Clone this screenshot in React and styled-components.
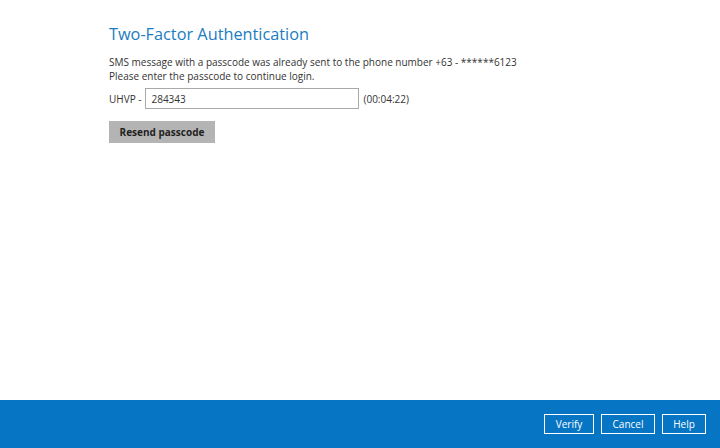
import styled, { createGlobalStyle } from 'styled-components';

const GlobalStyle = createGlobalStyle`
    html, body {
        margin: 0;
        padding: 0;
        background: #ffffff;
    }
    body {
        font-family: "Open Sans", "Noto Sans", sans-serif;
        color: #333333;
    }
`;

const Page = styled.div`
    display: flex;
    flex-direction: column;
    width: 720px;
    height: 448px;
    overflow: hidden;
`;

const Content = styled.main`
    flex: 1;
    padding: 22px 0 0 109px;
`;

const Title = styled.h1`
    margin: 0 0 9px 0;
    font-size: 16.3px;
    font-weight: 400;
    color: #1b7cc0;
    line-height: 24px;
`;

const Message = styled.p`
    margin: 0;
    font-size: 10px;
    line-height: 14px;
    color: #333333;
`;

const CodeRow = styled.div`
    display: flex;
    align-items: center;
    gap: 4px;
    margin-top: 5px;
    font-size: 10px;
    color: #333333;
`;

const CodeInput = styled.input`
    box-sizing: border-box;
    width: 214px;
    height: 21px;
    margin: 0;
    padding: 0 5px;
    border: 1px solid #a9a9a9;
    font-family: inherit;
    font-size: 10px;
    color: #333333;
    outline: none;
`;

const ResendButton = styled.button`
    display: block;
    margin-top: 12px;
    width: 106px;
    height: 22px;
    border: 0;
    background: #b4b4b4;
    font-family: inherit;
    font-size: 10px;
    font-weight: 700;
    color: #222222;
    padding: 0;
`;

const Footer = styled.footer`
    display: flex;
    justify-content: flex-end;
    align-items: center;
    gap: 7px;
    height: 48px;
    padding-right: 14px;
    background: #0675c4;
`;

const FooterButton = styled.button`
    box-sizing: border-box;
    height: 20px;
    min-width: ${(p) => p.$width}px;
    padding: 0;
    border: 1px solid #ffffff;
    background: transparent;
    color: #ffffff;
    font-family: inherit;
    font-size: 10px;
`;

const App = () => {
    return (
        <Page>
            <GlobalStyle />
            <Content>
                <Title>Two-Factor Authentication</Title>
                <Message>SMS message with a passcode was already sent to the phone number +63 - ******6123</Message>
                <Message>Please enter the passcode to continue login.</Message>
                <CodeRow>
                    <span>UHVP -</span>
                    <CodeInput defaultValue="284343" />
                    <span>(00:04:22)</span>
                </CodeRow>
                <ResendButton type="button">Resend passcode</ResendButton>
            </Content>
            <Footer>
                <FooterButton $width={50} type="button">Verify</FooterButton>
                <FooterButton $width={54} type="button">Cancel</FooterButton>
                <FooterButton $width={44} type="button">Help</FooterButton>
            </Footer>
        </Page>
    );
};

export default App;
